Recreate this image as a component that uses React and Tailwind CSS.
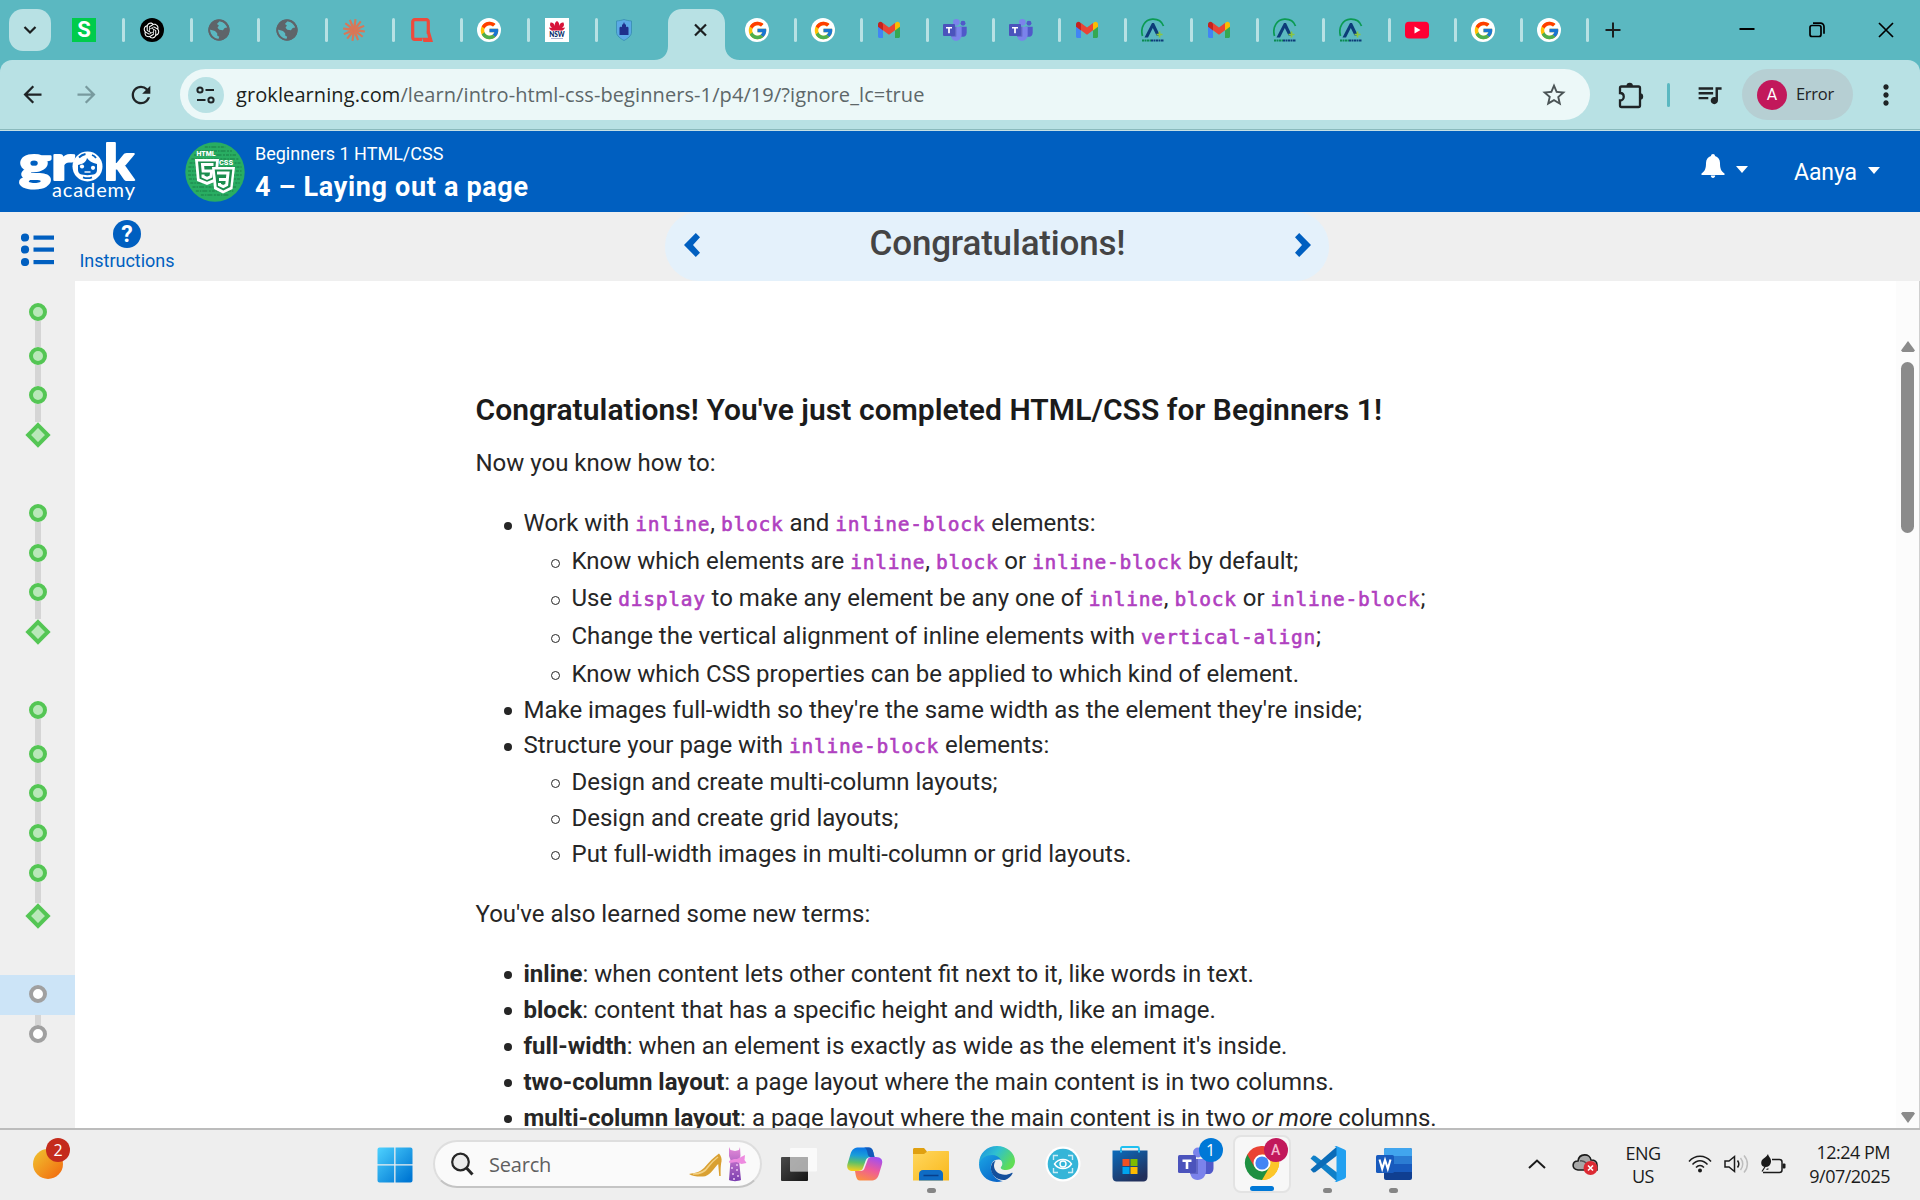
import React from "react";
import { FcGoogle } from "react-icons/fc";
import { RiOpenaiFill } from "react-icons/ri";
import { MdArrowBack, MdArrowForward, MdRefresh, MdStarBorder, MdQueueMusic, MdMoreVert } from "react-icons/md";

/* ---------- favicons ---------- */
const S = () => (
  <div className="flex h-6 w-6 items-center justify-center bg-[#00cc4b] font-['Roboto',sans-serif] text-[22px] leading-none font-bold text-white">S</div>
);
const Gpt = () => (
  <div className="flex h-6 w-6 items-center justify-center rounded-full bg-black text-white"><RiOpenaiFill size={19} /></div>
);
const Globe = () => (
  <svg viewBox="0 0 24 24" className="h-6 w-6">
    <circle cx="12" cy="12" r="10.6" fill="#5f6469" />
    <path d="M2.6 11.5 8 13l2.2 2.2v2.3l2 1.2-1 3-4-1.6-3.5-4zM12.5 3.2c3.500.4 6.500 3 7.700 6.300l-2.500.4-1.800 2.300-3.600-.5-1.800-2 1.400-2.200-2-1.500z" fill="#5bb8c1" />
    <circle cx="12" cy="12" r="9.8" fill="none" stroke="#5f6469" strokeWidth="1.7" />
  </svg>
);
const Claude = () => (
  <svg viewBox="-12 -12 24 24" className="h-6 w-6">
    {[0, 30, 60, 90, 120, 150, 180, 210, 240, 270, 300, 330].map((a) => (
      <path key={a} d="M0 -1.400L11 -1V1L0 1.400Z" fill="#d97757" transform={`rotate(${a + 8})`} />
    ))}
  </svg>
);
const RedQ = () => (
  <svg viewBox="0 0 24 24" className="h-6 w-6">
    <path d="M18.300 16V4a2 2 0 0 0-2-2.300H4.700a2 2 0 0 0-2 2v15.600a2 2 0 0 0 2 2H12" fill="none" stroke="#ee4a3c" strokeWidth="3.200" />
    <path d="M16.700 13.500h3.200L23 24h-9.500l-1.500-4.200h6z" fill="#ee4a3c" />
  </svg>
);
const G = () => (
  <div className="flex h-6 w-6 items-center justify-center rounded-full bg-white"><FcGoogle size={21} /></div>
);
const Nsw = () => (
  <svg viewBox="0 0 24 24" className="h-6 w-6">
    <rect width="24" height="24" fill="#fff" />
    <path d="M12 3c2 1 2.500 3 2 5 1-3 3-4 4.500-3.500C19.500 7 19 8 17 10l3-.5c-.5 2.500-3 3.500-5 3H9c-2 .5-4.500-.5-5-3l3 .5C5 8 4.500 7 5.500 4.500 7 4 9 5 10 8c-.5-2 0-4 2-5z" fill="#d7153a" />
    <text x="12" y="18.500" textAnchor="middle" fontSize="6.500" fontWeight="900" fontFamily="Lato, sans-serif" fill="#002664">NSW</text>
    <path d="M6 20.500h12" stroke="#8a93b8" strokeWidth=".7" />
  </svg>
);
const Shield = () => (
  <svg viewBox="0 0 24 24" className="h-6 w-6">
    <path d="M4.500 3c3-.2 6-1 7.500-1.500C13.500 2 16.500 2.800 19.500 3v11c0 4-4 6.500-7.500 8.500C8.500 20.500 4.500 18 4.500 14z" fill="#5ba9e6" stroke="#3d93b8" />
    <path d="M7.500 17V9.500l1.500-1 1 .8V6.500h1L12 4l1 2.500h1v2.800l1-.8 1.500 1V17z" fill="#1f2f8c" />
  </svg>
);
const Gmail = () => (
  <svg viewBox="0 0 24 24" className="h-6 w-6">
    <path d="M1 7v11.500c0 .8.7 1.500 1.500 1.500H6V9z" fill="#4285f4" />
    <path d="M23 7v11.500c0 .8-.7 1.500-1.500 1.500H18V9z" fill="#34a853" />
    <path d="M6 5.500v7L1 8.700V6.300C1 4.200 3.400 3 5 4.300z" fill="#c5221f" />
    <path d="M18 5.500v7l5-3.800V6.300c0-2.100-2.400-3.300-4-2z" fill="#fbbc04" />
    <path d="M6 5l6 4.500L18 5v7.300l-6 4.500-6-4.500z" fill="#ea4335" />
  </svg>
);
const TeamsArt = ({ className }) => (
  <svg viewBox="0 0 36 36" className={className}>
    <circle cx="30" cy="8" r="3.700" fill="#5059c9" />
    <path d="M25 13h10.500v9c0 4-2.500 6-5 6h-5z" fill="#5059c9" />
    <circle cx="20" cy="6.500" r="5" fill="#7b83eb" />
    <path d="M12 13h16v12c0 5-3.500 9-8.500 9S12 30 12 25z" fill="#7b83eb" />
    <path d="M12 13h8v15h-8z" fill="#4a51a8" opacity=".55" />
    <rect y="9" width="18" height="18" rx="1.600" fill="#4b53bc" />
    <path d="M4.500 13.500h9v2.400h-3.200V23H7.700v-7.100H4.500z" fill="#fff" />
  </svg>
);
const Teams = () => <TeamsArt className="h-6 w-6" />;
const Advance = () => (
  <svg viewBox="0 0 24 24" className="h-6 w-6">
    <path d="M1.500 18C-1 9 4 1.500 11.500 1.200 17 1 21 4 22.500 8" fill="none" stroke="#0b9a52" strokeWidth="1.700" />
    <path d="M3.500 19.500L11 5h2l6 12.500h-3.500L11.800 10 7 19.500z" fill="#0d3c78" />
    <path d="M18.500 13.500v6M15.500 16.500h6" stroke="#8cc63f" strokeWidth="1.700" />
    <path d="M1 22.500h9" stroke="#0b8a52" strokeWidth="2" strokeDasharray="2 .5" />
    <path d="M10 22.500h13" stroke="#0d3c78" strokeWidth="2" strokeDasharray="2 .5" />
  </svg>
);
const YT = () => (
  <svg viewBox="0 0 24 24" className="h-6 w-6">
    <rect y="3.700" width="24" height="16.800" rx="4" fill="#f03" />
    <path d="M9.500 8.500v7l6-3.500z" fill="#fff" />
  </svg>
);

const leftTabs = [S, Gpt, Globe, Globe, Claude, RedQ, G, Nsw, Shield];
const rightTabs = [G, G, Gmail, Teams, Teams, Gmail, Advance, Gmail, Advance, Advance, YT, G, G];

function TabStrip() {
  return (
    <div className="flex h-[60px] items-center bg-[#5bb8c1]">
      <div className="ml-[9px] flex h-[42px] w-[42px] items-center justify-center rounded-[14px] bg-[#b8e1e4]">
        <svg viewBox="0 0 14 14" className="h-3.5 w-3.5"><path d="M1.500 4l5.500 5.500L12.500 4" fill="none" stroke="#1b1f20" strokeWidth="2.200" /></svg>
      </div>
      <div className="ml-[21px] flex">
        {leftTabs.map((I, i) => (
          <div key={i} className={i < 8 ? "flex w-[67.5px] items-center gap-[26px]" : "flex w-[42px] items-center"}>
            <I />
            {i < 8 && <div className="h-6 w-[3px] rounded-sm bg-[#b8e1e4]" />}
          </div>
        ))}
      </div>
      <div className="grid h-[60px] w-[86px] shrink-0">
        <svg viewBox="0 0 86 60" className="col-start-1 row-start-1 h-[60px] w-[86px]">
          <path d="M0 60c9 0 14-6 14-14V23C14 15 20 9 28 9h29c8 0 14 6 14 14v23c0 8 6 14 15 14z" fill="#b8e1e4" />
          <path d="M41 24.500l11 11M52 24.500l-11 11" stroke="#1b1f20" strokeWidth="2.200" />
        </svg>
      </div>
      <div className="ml-[5px] flex">
        {rightTabs.map((I, i) => (
          <div key={i} className="flex w-[66px] items-center gap-[25px]">
            <I />
            <div className="h-6 w-[3px] rounded-sm bg-[#b8e1e4]" />
          </div>
        ))}
      </div>
      <svg viewBox="0 0 16 16" className="ml-[2px] h-4 w-4"><path d="M8 .5v15M.5 8h15" stroke="#1b1f20" strokeWidth="2" /></svg>
      <svg viewBox="0 0 16 16" className="-mt-0.5 ml-[118px] h-4 w-4"><path d="M.5 8h15" stroke="#000" strokeWidth="2" /></svg>
      <svg viewBox="0 0 16 16" className="ml-[54px] h-4 w-4" fill="none" stroke="#000" strokeWidth="1.700"><rect x="1" y="3.500" width="11" height="11" rx="2" /><path d="M4 1.200h7.500a3.500 3.500 0 0 1 3.500 3.500v7" /></svg>
      <svg viewBox="0 0 16 16" className="ml-[53px] h-4 w-4"><path d="M1 1l14 14M15 1L1 15" stroke="#000" strokeWidth="1.700" /></svg>
    </div>
  );
}

function Toolbar() {
  return (
    <div className="bg-[#5bb8c1]">
      <div className="flex h-[69px] items-center rounded-t-[12px] bg-[#b8e1e4] text-[#1f2426]">
        <MdArrowBack size={27} className="ml-[19px]" />
        <MdArrowForward size={27} className="ml-[27px] text-[#789a9e]" />
        <MdRefresh size={28} className="ml-[27px]" />
        <div className="ml-[25px] flex h-[51px] w-[1410px] items-center rounded-full bg-[#ecf8f8]">
          <div className="ml-2 flex h-9 w-9 items-center justify-center rounded-full bg-[#b8e1e4]">
            <svg viewBox="0 0 20 20" className="h-5 w-5" fill="none" stroke="#1f2426" strokeWidth="2"><circle cx="4" cy="5" r="2.600" /><path d="M9.500 5H18M1 15h8.500" /><circle cx="15" cy="15" r="2.600" /></svg>
          </div>
          <div className="ml-3 w-[1290px] font-['Open_Sans',sans-serif] text-[20px] tracking-[0.09px] whitespace-nowrap text-[#5d6769]">
            <span className="text-[#1b1f20]">groklearning.com</span>/learn/intro-html-css-beginners-1/p4/19/?ignore_lc=true
          </div>
          <MdStarBorder size={28} className="ml-[14px] shrink-0 text-[#4b5456]" />
        </div>
        <svg viewBox="0 0 26 28" className="ml-[28px] h-7 w-[26px]">
          <path d="M3.500 5.500h17a1.500 1.500 0 0 1 1.500 1.500v17.500a1.500 1.500 0 0 1-1.500 1.500h-17A1.500 1.500 0 0 1 2 24.500V19.500c5 0 5-7.500 0-7.500V7a1.500 1.500 0 0 1 1.500-1.500z" fill="none" stroke="#1f2426" strokeWidth="2.300" />
          <path d="M8.500 5a3.200 3.200 0 0 1 6.400 0zM22 12.300a3.200 3.200 0 0 1 0 6.400z" fill="#1f2426" />
        </svg>
        <div className="ml-[23px] h-6 w-[3px] rounded bg-[#5bb8c1]" />
        <MdQueueMusic size={29} className="ml-[25px]" />
        <div className="ml-[18px] flex h-[51px] w-[111px] items-center rounded-full bg-[#b6cfd3]">
          <div className="ml-[15px] flex h-[30px] w-[30px] items-center justify-center rounded-full bg-[#c2185b] font-['Roboto',sans-serif] text-base text-white">A</div>
          <span className="ml-[9px] font-['Open_Sans',sans-serif] text-[16.500px] tracking-[-0.3px]">Error</span>
        </div>
        <MdMoreVert size={32} className="ml-[17px]" />
      </div>
      <div className="h-px bg-[#8bbabd]" />
      <div className="h-px bg-[#c5e0e4]" />
    </div>
  );
}

const Caret = () => <svg viewBox="0 0 12 7" className="h-[7px] w-3"><path d="M0 0h12L6 7z" fill="#fff" /></svg>;

function Header() {
  return (
    <header className="flex h-[81px] items-start bg-[#005fc0] text-white">
      <svg viewBox="0 0 120 66" className="mt-[11px] ml-4 h-[66px] w-[120px] overflow-visible" fill="#fff">
        <text x="3" y="38" fontFamily="Lato, sans-serif" fontWeight="900" fontSize="48" textLength="55" lengthAdjust="spacingAndGlyphs" stroke="#fff" strokeWidth="2" strokeLinejoin="round">gr</text>
        <text x="88" y="38" fontFamily="Lato, sans-serif" fontWeight="900" fontSize="50" textLength="30" lengthAdjust="spacingAndGlyphs" stroke="#fff" strokeWidth="2" strokeLinejoin="round">k</text>
        <circle cx="71.500" cy="24.500" r="15" />
        <path d="M62 23c5-1 8-3 9-7 2 3 5 5 10 6v6c0 2-1 3-2 4-4 1.500-11 1.500-15 0-1-1-2-2-2-4z" fill="#005fc0" />
        <path d="M63 15.500c2-2 4-3 6.500-3.500M76 13c1.500.5 3 1.500 4 3M67 35.300c3 1.200 6 1.200 9 0" fill="none" stroke="#005fc0" strokeWidth="1.800" />
        <circle cx="66" cy="24.500" r="2.100" /><circle cx="77" cy="25.800" r="2.100" />
        <path d="M68.500 30h6" stroke="#fff" strokeWidth="1.400" />
        <text x="36" y="55" fontFamily="Lato, sans-serif" fontSize="20" textLength="83">academy</text>
      </svg>
      <svg viewBox="0 0 60 60" className="mt-[11px] ml-[49px] h-[60px] w-[60px]">
        <circle cx="30" cy="30" r="29.700" fill="#29ad62" />
        {[5, 9, 13, 17, 21, 25, 29, 33, 37, 41, 45, 49, 53].map((y) => {
          const w = Math.sqrt(27 * 27 - (y - 30) * (y - 30));
          return <path key={y} d={`M${30 - w} ${y}H${30 + w}`} stroke="#1a7d47" strokeWidth="1.300" strokeDasharray="3 1 1.500 1 5 1.500 2 1" opacity=".65" />;
        })}
        <path d="M10 17h24l-2 22-10 4-10-4z" fill="#fff" />
        <path d="M13 19.500h18l-1.600 17.300-7.400 3-7.400-3z" fill="#1b8d4e" />
        <path d="M28.500 22.500H17.500l.6 6.500h8.600L26 34.500l-4 1.800-4-1.800v-2" fill="none" stroke="#fff" strokeWidth="3" />
        <path d="M27 25h23l-2.500 22L38 51.500l-9-4.500z" fill="#fff" />
        <path d="M29.700 27.500h17.600l-2 17.500-7 3.500-6.600-3.500z" fill="#1b8d4e" />
        <path d="M32 31h11l-.7 6.500H34m8.300 0-.6 5.300-3.400 1.700-3.800-1.700V41" fill="none" stroke="#fff" strokeWidth="3" />
        <text x="11.500" y="14" fontFamily="Roboto, sans-serif" fontWeight="900" fontSize="6.500" textLength="19" lengthAdjust="spacingAndGlyphs" fill="#fff">HTML</text>
        <text x="34" y="23" fontFamily="Roboto, sans-serif" fontWeight="900" fontSize="6.500" textLength="14" lengthAdjust="spacingAndGlyphs" fill="#fff">CSS</text>
      </svg>
      <div className="ml-[10px] font-['Roboto',sans-serif] whitespace-nowrap">
        <div className="mt-[11px] text-[18px] leading-6">Beginners 1 HTML/CSS</div>
        <div className="mt-[3px] text-[27px] leading-9 font-bold tracking-[0.66px]">4 – Laying out a page</div>
      </div>
      <svg viewBox="0 0 24 26" className="mt-[23px] ml-auto h-[26px] w-6" fill="#fff">
        <path d="M12 0c1.200 0 2 .8 2 2 3 .8 5 3.500 5 7 0 5 .8 8 4.500 10.500V21H.5v-1.500C4.200 17 5 14 5 9c0-3.500 2-6.200 5-7 0-1.200.8-2 2-2zM9.800 21.500h4.400c0 1.500-1 2.500-2.200 2.500s-2.200-1-2.200-2.500z" />
      </svg>
      <div className="mt-[35px] ml-[11px] flex"><Caret /></div>
      <span className="mt-[26px] ml-[46px] font-['Roboto',sans-serif] text-[23px] leading-8 tracking-[-0.1px]">Aanya</span>
      <div className="mt-[36px] mr-[40px] ml-[11px] flex"><Caret /></div>
    </header>
  );
}

const Chevron = ({ flip }) => (
  <svg viewBox="0 0 16 24" className={flip ? "h-6 w-4 rotate-180" : "h-6 w-4"}><path d="M11.800 0L16 4.300 9 12l7 7.700-4.200 4.300L0 12z" fill="#005fc0" /></svg>
);

function SubBar() {
  return (
    <div className="flex h-[69px] bg-[#efefef] font-['Roboto',sans-serif]">
      <svg viewBox="0 0 34 34" className="mt-5 ml-[21px] h-[34px] w-[34px]" fill="#005fc0">
        {[5.5, 17.5, 30].map((y) => <g key={y}><circle cx="4" cy={y} r="4.100" /><rect x="12.500" y={y - 2} width="20.500" height="4.200" /></g>)}
      </svg>
      <div className="ml-[24px] flex w-[96px] flex-col items-center">
        <div className="mt-2 flex h-7 w-7 items-center justify-center rounded-full bg-[#005fc0] text-[23px] leading-none font-bold text-white">?</div>
        <span className="mt-[1px] text-[18px] leading-6 text-[#005fc0]">Instructions</span>
      </div>
      <div className="ml-[490px] flex w-[664px] items-start justify-between rounded-[34px] bg-[#e4f1fb] pr-[18px] pl-[19px]">
        <div className="mt-[21px]"><Chevron /></div>
        <h1 className="mt-[8px] text-[35px] leading-[48px] font-medium tracking-[-0.18px] text-[#444]">Congratulations!</h1>
        <div className="mt-[21px]"><Chevron flip /></div>
      </div>
    </div>
  );
}

/* ---------- progress rail: [kind, height of the connector below] ---------- */
const groups = [
  [["c", 26], ["c", 21], ["c", 18], ["d", 0]],
  [["c", 22], ["c", 21], ["c", 18], ["d", 0]],
  [["c", 26], ["c", 21], ["c", 22], ["c", 22], ["c", 21], ["d", 0]],
];
const Connector = ({ h }) => <div className="w-1.5 shrink-0 bg-[#d5d5d5]" style={{ height: h }} />;
const Dot = () => <div className="h-[18px] w-[18px] shrink-0 rounded-full border-4 border-[#54c654] bg-[#b9e8b9]" />;
const Gray = () => <div className="h-[18px] w-[18px] shrink-0 rounded-full border-4 border-[#a0a0a0] bg-white" />;
const Diamond = () => (
  <svg viewBox="0 0 26 26" className="h-[26px] w-[26px] shrink-0"><path d="M13 3.200L22.800 13 13 22.800 3.200 13z" fill="#b9e8b9" stroke="#54c654" strokeWidth="4" /></svg>
);
function Rail() {
  return (
    <aside className="flex w-[75px] shrink-0 flex-col items-center bg-[#efefef] pt-[22px]">
      {groups.map((g, i) => (
        <div key={i} className={i === 2 ? "mb-[46px] flex flex-col items-center" : "mb-[56px] flex flex-col items-center"}>
          {g.map(([k, h], j) => (
            <React.Fragment key={j}>
              {k === "c" ? <Dot /> : <Diamond />}
              {h > 0 && <Connector h={h} />}
            </React.Fragment>
          ))}
        </div>
      ))}
      <div className="flex h-10 w-full items-start justify-center bg-[#cce4f7] pt-[10px]"><Gray /></div>
      <Connector h={10} />
      <Gray />
    </aside>
  );
}

const C = ({ children }) => <code className="font-['DejaVu_Sans_Mono',monospace] text-[19.500px] tracking-[0.760px] text-[#b040c0] [-webkit-text-stroke:0.600px_#b040c0]">{children}</code>;

function Li({ sub, tall, children }) {
  return (
    <div className={(tall ? "h-[37.5px] " : "h-9 ") + (sub ? "flex items-center pl-[75px]" : "flex items-center pl-[28px]")}>
      <div className={sub ? "mt-[3px] mr-[12px] h-[9px] w-[9px] rounded-full border border-[#262626]" : "mt-[3px] mr-[12px] h-2 w-2 rounded-full bg-[#262626]"} />
      <div className="whitespace-pre">{children}</div>
    </div>
  );
}

function Content() {
  return (
    <main className="min-w-0 flex-1 pt-[105px] pl-[400.5px] font-['Roboto',sans-serif] text-[24px] leading-9 text-[#262626]">
      <h2 className="h-[48px] text-[30px] leading-[48px] font-semibold tracking-[0.05px] whitespace-nowrap text-[#1b1b1b]">Congratulations! You've just completed HTML/CSS for Beginners 1!</h2>
      <p className="mt-[11px]">Now you know how to:</p>
      <div className="mt-[24.5px]">
        <Li tall>Work with <C>inline</C>, <C>block</C> and <C>inline-block</C> elements:</Li>
        <Li sub tall>Know which elements are <C>inline</C>, <C>block</C> or <C>inline-block</C> by default;</Li>
        <Li sub tall>Use <C>display</C> to make any element be any one of <C>inline</C>, <C>block</C> or <C>inline-block</C>;</Li>
        <Li sub tall>Change the vertical alignment of inline elements with <C>vertical-align</C>;</Li>
        <Li sub>Know which CSS properties can be applied to which kind of element.</Li>
        <Li>Make images full-width so they're the same width as the element they're inside;</Li>
        <Li>Structure your page with <C>inline-block</C> elements:</Li>
        <Li sub>Design and create multi-column layouts;</Li>
        <Li sub>Design and create grid layouts;</Li>
        <Li sub>Put full-width images in multi-column or grid layouts.</Li>
      </div>
      <p className="mt-6">You've also learned some new terms:</p>
      <div className="mt-6">
        <Li><b>inline</b>: when content lets other content fit next to it, like words in text.</Li>
        <Li><b>block</b>: content that has a specific height and width, like an image.</Li>
        <Li><b>full-width</b>: when an element is exactly as wide as the element it's inside.</Li>
        <Li><b>two-column layout</b>: a page layout where the main content is in two columns.</Li>
        <Li><b>multi-column layout</b>: a page layout where the main content is in two <i>or more</i> columns.</Li>
      </div>
    </main>
  );
}

function Scrollbar() {
  return (
    <div className="flex w-[24px] flex-col items-center border-r border-[#d0d0d0] bg-[#fcfcfc] pt-[60px]">
      <svg viewBox="0 0 14 11" className="h-[11px] w-3.5"><path d="M7 0l7 9.500L12.500 11h-11L0 9.500z" fill="#8b8b8b" /></svg>
      <div className="mt-[10px] h-[171px] w-[13px] rounded-full bg-[#8b8b8b]" />
      <svg viewBox="0 0 14 11" className="mt-auto mb-[5px] h-[11px] w-3.5"><path d="M7 11L0 1.500 1.500 0h11L14 1.500z" fill="#8b8b8b" /></svg>
    </div>
  );
}

/* ---------- taskbar ---------- */
const TaskView = () => (
  <svg viewBox="0 0 36 36" className="h-9 w-9"><defs><linearGradient id="tv" x2="1" y2="1"><stop stopColor="#4a4a4a" /><stop offset="1" stopColor="#151515" /></linearGradient></defs>
    <rect y="11" width="27" height="24" rx="1" fill="url(#tv)" /><rect x="9" y="2" width="27" height="23.500" rx="1" fill="#fff" opacity=".72" /><rect x="9" y="11" width="18" height="14.500" fill="#999" opacity=".6" /></svg>
);
const Copilot = () => (
  <svg viewBox="0 0 36 36" className="h-9 w-9">
    <defs>
      <linearGradient id="cp1" x1=".5" x2=".4" y2="1"><stop stopColor="#0a75e8" /><stop offset=".35" stopColor="#1a9ed8" /><stop offset=".65" stopColor="#5cc06a" /><stop offset="1" stopColor="#f5d01c" /></linearGradient>
      <linearGradient id="cp2" x1=".7" x2=".3" y2="1"><stop stopColor="#a24ff0" /><stop offset=".5" stopColor="#ee5a9a" /><stop offset="1" stopColor="#fb8d45" /></linearGradient>
    </defs>
    <path d="M25 11h4c5 0 7 3 6 7l-3 10c-1.500 5-4 6.500-8 6.500H13c-2.500 0-3.500-2-4.200-5L8 25h5c3 0 4-1 5-4l3-8c.8-1.500 2-2 4-2z" fill="url(#cp2)" />
    <path d="M11 25H6c-5 0-6.500-3-5.500-7L3.500 8C5 3 7.500 1.500 12 1.500h9.500c3 0 4 1.500 4.800 4.500L27.500 11H24c-3 0-4.500 1-5.500 4l-2.500 7c-.8 2.200-2.500 3-5 3z" fill="url(#cp1)" />
    <path d="M17 1.500h4.500c3 0 4 1.500 4.800 4.500L27.500 11h-3c-3 0-3.500-1.500-4-4-.6-3.500-1.500-5-3.500-5.500z" fill="#1258b8" />
  </svg>
);
const Explorer = () => (
  <svg viewBox="0 0 36 36" className="h-9 w-9"><defs><linearGradient id="ex" x2="1" y2="1"><stop stopColor="#ffd75e" /><stop offset="1" stopColor="#f9b81c" /></linearGradient></defs>
    <path d="M0 3.500C0 2.500.7 2 1.500 2H11l3 3.500V10H0z" fill="#e0a010" /><path d="M0 8h11l4-3h20c.6 0 1 .4 1 1v28.500H0z" fill="url(#ex)" />
    <path d="M6 34.500V28c0-2 1.500-4 4-4h16c2.500 0 4 2 4 4v6.500z" fill="#0f6cc4" /><path d="M10.500 29.500h15" stroke="#083f8a" strokeWidth="1.500" /></svg>
);
const Edge = () => (
  <svg viewBox="0 0 36 36" className="h-9 w-9"><defs>
    <linearGradient id="e1" x1="0" x2="1" y2=".5"><stop stopColor="#1a8ce0" /><stop offset=".5" stopColor="#2fc0d0" /><stop offset="1" stopColor="#5fdd55" /></linearGradient>
    <linearGradient id="e2" x2=".7" y2="1"><stop stopColor="#1ba5e5" /><stop offset="1" stopColor="#0a66c8" /></linearGradient></defs>
    <path d="M0 18C0 7 8 0 18 0s18 7 18 15c0 5-3.500 9-9 9-4 0-6-1.500-5-3 1.500-2 1.500-3 1-5C21 11 9 7 0 18z" fill="url(#e1)" />
    <path d="M0 18C3 8 18 6 22 14c-6-2-11 3-10 9 1 7 7 12 12 12C11 39 0 30 0 18z" fill="url(#e2)" />
    <path d="M12 21c-1 8 7 14 14 13 3-1 6-3.500 7.500-6.500.4-.9-.4-1-1-.6-7 4-17 1-17.500-6.900 0-3 1-4.500 2-5.500-3 1-4.500 3-5 6z" fill="#134f9c" />
  </svg>
);
const Eye = () => (
  <svg viewBox="0 0 36 36" className="h-9 w-9"><circle cx="18" cy="18" r="17.500" fill="#fff" /><circle cx="18" cy="18" r="15.300" fill="#35b5d8" />
    <g fill="none" stroke="#fff" strokeWidth="1.400"><path d="M8.500 14v-4.500H13M23 9.500h4.500V14M27.500 22v4.500H23M13 26.500H8.500V22" opacity=".75" /><path d="M9.500 18c4-6 13-6 17 0-4 6-13 6-17 0z" /><circle cx="18" cy="18" r="3" /></g></svg>
);
const Store = () => (
  <svg viewBox="0 0 36 36" className="h-9 w-9"><defs><linearGradient id="st" x2=".6" y2="1"><stop stopColor="#0b6cbd" /><stop offset="1" stopColor="#22305c" /></linearGradient></defs>
    <path d="M9 6V2.500C9 1.500 9.500 1 10.500 1h15c1 0 1.500.5 1.500 1.500V6" fill="none" stroke="#1fc0f0" strokeWidth="1.800" /><path d="M.5 4.500h35V31c0 3-2 4.500-4 4.500h-27c-2 0-4-1.500-4-4.500z" fill="url(#st)" />
    <path d="M9 6.500V4.500M27 6.500V4.500" fill="none" stroke="#28c4f5" strokeWidth="1.800" />
    <rect x="10.500" y="13" width="7" height="7" fill="#f25022" /><rect x="18.500" y="13" width="7" height="7" fill="#7fba00" /><rect x="10.500" y="21" width="7" height="7" fill="#00a4ef" /><rect x="18.500" y="21" width="7" height="7" fill="#ffb900" /></svg>
);
const Chrome = () => (
  <svg viewBox="0 0 36 36" className="h-9 w-9">
    <path d="M18 18L2.400 9A18 18 0 0 1 33.600 9z" fill="#ea4335" /><path d="M18 18L33.600 9A18 18 0 0 1 18 36z" fill="#fbbc04" /><path d="M18 18v18A18 18 0 0 1 2.400 9z" fill="#1e9041" />
    <path d="M18 9h15.600A18 18 0 0 1 18 36l7.800-13.500z" fill="#fcc62a" /><path d="M2.400 9l7.800 13.500L18 9z" fill="#ea4335" /><path d="M10.200 22.500L18 36l7.800-13.500z" fill="#1e9041" />
    <circle cx="18" cy="18" r="9" fill="#fff" /><circle cx="18" cy="18" r="7" fill="#4285f4" /></svg>
);
const VSCode = () => (
  <svg viewBox="0 0 36 36" className="h-9 w-9">
    <path d="M.5 12.500l2.700-3 2 .3L27 26.500v9z" fill="#1080c8" /><path d="M.5 23.500l2.700 3 2-.3L27 9.500v-9z" fill="#0a6cb8" />
    <path d="M26.500 0l8 3.500c1 .5 1.500 1 1.500 2v25c0 1-.5 1.700-1.500 2.200l-8 3.300c-1 .3-1.500 0-2-.5 1 .3 2-.5 2-2V2.500c0-1.500-1-2-2-2 .5-.5 1-.8 2-.5z" fill="#22a0f0" /></svg>
);
const Word = () => (
  <svg viewBox="0 0 36 36" className="h-9 w-9"><rect x="8" y="2" width="28" height="32" rx="2" fill="#103f91" /><path d="M8 18h28v8H8z" fill="#185abd" /><path d="M8 10h28v8H8z" fill="#2b7cd3" /><path d="M8 10V4c0-1.200.8-2 2-2h24c1.200 0 2 .8 2 2v6z" fill="#41a5ee" />
    <rect y="9" width="18" height="18" rx="1.600" fill="#185abd" /><path d="M3.500 13.500l2.700 9.300L9 14l2.800 8.800 2.700-9.300" fill="none" stroke="#fff" strokeWidth="2.100" /></svg>
);

const apps = [
  [TaskView], [Copilot], [Explorer, "run"], [Edge], [Eye], [Store], [() => <TeamsArt className="h-9 w-9" />, "", "1"], [Chrome, "active", "A"], [VSCode, "run"], [Word, "run"],
];

function Taskbar() {
  return (
    <footer className="flex h-[72px] border-t-2 border-[#bcbcbc] bg-[#eeeeee] font-['Open_Sans',sans-serif] text-[#1b1b1b]">
      <div className="relative mt-[19px] ml-[33px] h-[30px] w-[30px] rounded-full bg-linear-to-br from-[#edc42f] to-[#f0620c]">
        <div className="absolute -top-[11px] left-[13px] flex h-6 w-6 items-center justify-center rounded-full bg-[#c42b1c] text-[16px] text-white">2</div>
      </div>
      <svg viewBox="0 0 36 36" className="mt-[17px] ml-[314px] h-9 w-9"><defs><linearGradient id="win" gradientUnits="userSpaceOnUse" x2="32" y2="32"><stop stopColor="#4fd3ff" /><stop offset="1" stopColor="#0078d4" /></linearGradient></defs>
        <path d="M.5 2.500a2 2 0 0 1 2-2h14.700v16.700H.5zM18.500.5h15a2 2 0 0 1 2 2v14.700h-17zM.5 18.500h16.700v17H2.500a2 2 0 0 1-2-2zM18.500 18.500h17v15a2 2 0 0 1-2 2h-15z" fill="url(#win)" /></svg>
      <div className="mt-[10px] ml-[20px] flex h-12 w-[329px] items-center rounded-full border-2 border-b-[#c4c4c4] border-[#dedede] bg-[#fafafa]">
        <svg viewBox="0 0 24 24" className="ml-[15px] h-6 w-6" fill="none" stroke="#262626" strokeWidth="2.200"><circle cx="10.500" cy="10" r="8.300" fill="#ededed" /><path d="M16.500 16l6 6.500" strokeWidth="3" /></svg>
        <span className="mt-px ml-[15px] text-[20px] tracking-[-0.2px] text-[#5f5f5f]">Search</span>
        <svg viewBox="0 0 58 36" className="mr-[13px] ml-auto h-9 w-[58px]">
          <defs><linearGradient id="dr" x2="0" y2="1"><stop stopColor="#e58bd8" /><stop offset="1" stopColor="#7b3fb0" /></linearGradient></defs>
          <path d="M0 28c6-1 11-2 15-6C20 16 25 11 30 7.500c2 2 3 5 2.500 8-.8 3-1 9-.8 14.500h-1.500l-1-12c-4 4-7 10-13 12.200C11 31 4 30.500 0 28z" fill="#d9a032" />
          <path d="M4 28c6 0 12-2 15-7 3-4 6-7 10-10" fill="none" stroke="#f3d184" strokeWidth="1.500" />
          <path d="M40 1l1.500 3 4.500 1 4-1L51 1l.5 9-1.500 4 2 20c-3 1.500-9 1.500-12 0l1.500-20-1.500-4z" fill="url(#dr)" />
          <path d="M40 15l5-2h3l8-4-.5 5 2 3-5 1-5-2-7 1z" fill="#ee8be0" />
          <g fill="#ecc4f0"><circle cx="43" cy="22" r="1" /><circle cx="48" cy="24" r="1" /><circle cx="44" cy="28" r="1" /><circle cx="49" cy="30" r="1" /><circle cx="45" cy="33" r="1" /><circle cx="48" cy="19" r="1" /></g>
        </svg>
      </div>
      <div className="ml-[4px] flex pt-[5px]">
        {apps.map(([I, st, badge], i) => (
          <div key={i} className="flex w-[66.1px] justify-center">
            <div className={st === "active" ? "relative flex h-[58px] w-[58px] flex-col items-center rounded-lg border-2 border-[#e3e3e3] bg-[#f7f7f7] pt-[9px]" : "relative flex h-[58px] w-[58px] flex-col items-center pt-[11px]"}>
              <I />
              {st === "active" && <div className="mt-[6px] h-[5px] w-6 shrink-0 rounded-full bg-[#0078d7]" />}
              {st === "run" && <div className="mt-[6px] h-[5px] w-[9px] shrink-0 rounded-full bg-[#858585]" />}
              {badge === "1" && <div className="absolute top-[3px] left-[32px] flex h-6 w-6 items-center justify-center rounded-full bg-[#0078d7] text-[16px] text-white">1</div>}
              {badge === "A" && <div className="absolute top-[1px] left-[29px] flex h-6 w-6 items-center justify-center rounded-full bg-[#c2185b] font-['Roboto',sans-serif] text-[14px] font-medium text-[#f5b8d0]">A</div>}
            </div>
          </div>
        ))}
      </div>
      <div className="mr-[30px] ml-auto flex h-[68px] items-center">
        <svg viewBox="0 0 18 10" className="h-2.5 w-[18px]"><path d="M1 9l8-7.500L17 9" fill="none" stroke="#1b1b1b" strokeWidth="2" /></svg>
        <svg viewBox="0 0 26 22" className="ml-[26px] h-[22px] w-[26px]">
          <path d="M6 17c-7-1-6-9 0-9 1-8 12-8 13-1 4 0 6 2 6 5v5z" fill="#a8a8a8" stroke="#1b1b1b" strokeWidth="1.600" /><path d="M8 8c4-1 6 2 10 5" fill="none" stroke="#555" strokeWidth="1.500" />
          <circle cx="18.500" cy="15" r="7" fill="#dc2a33" /><path d="M16 12.500l5 5M21 12.500l-5 5" stroke="#fff" strokeWidth="1.600" /></svg>
        <div className="mt-px ml-[27px] w-[36px] text-center text-[18px] leading-[23px] tracking-[-0.6px]">ENG<br />US</div>
        <svg viewBox="0 0 24 18" className="ml-[27px] h-[18px] w-6" fill="none" stroke="#1b1b1b" strokeWidth="1.500"><path d="M1 6.500c6-7 16-7 22 0M4.500 9.500c4.500-5 10.500-5 15 0M8 12.500c2.500-2.800 5.500-2.800 8 0" /><circle cx="12" cy="15.500" r="2" fill="#1b1b1b" stroke="none" /></svg>
        <svg viewBox="0 0 26 20" className="ml-[12px] h-5 w-[26px]" fill="none" stroke="#1b1b1b" strokeWidth="1.500"><path d="M1 7v6h4l5.500 4.500v-15L5 7z" /><path d="M13.500 6.500c1.500 2 1.500 5 0 7" /><path d="M16.500 4c3 3.500 3 8.500 0 12M20 1.500c4.500 5 4.500 12 0 17" stroke="#bdbdbd" /></svg>
        <svg viewBox="0 0 26 20" className="ml-[10px] h-5 w-[26px]"><path d="M12 5.500h7.500a2.500 2.500 0 0 1 2.500 2.500v8a2.500 2.500 0 0 1-2.500 2.500H3" fill="none" stroke="#1b1b1b" strokeWidth="1.500" /><rect x="22.500" y="9.500" width="3" height="5" rx="1" fill="#1b1b1b" /><path d="M8 0c.5 3 3.500 4 3 8-.4 3-2.500 5-5.500 5C1 13 .5 8.500 2 6 3.500 4 6.500 3 8 0z" fill="#1b1b1b" /><path d="M2 17.500l4.500-7M6.500 15.500l2-.8" stroke="#1b1b1b" strokeWidth="1.200" /></svg>
        <div className="ml-[20px] w-[84px] text-right text-[18px] leading-[24px] tracking-[-0.5px] whitespace-nowrap">12:24 PM<br />9/07/2025</div>
      </div>
    </footer>
  );
}

export default function App() {
  return (
    <div className="flex h-[1200px] w-[1920px] flex-col overflow-hidden bg-white">
      <TabStrip />
      <Toolbar />
      <Header />
      <SubBar />
      <div className="flex h-[847px] overflow-hidden">
        <Rail />
        <Content />
        <Scrollbar />
      </div>
      <Taskbar />
    </div>
  );
}
